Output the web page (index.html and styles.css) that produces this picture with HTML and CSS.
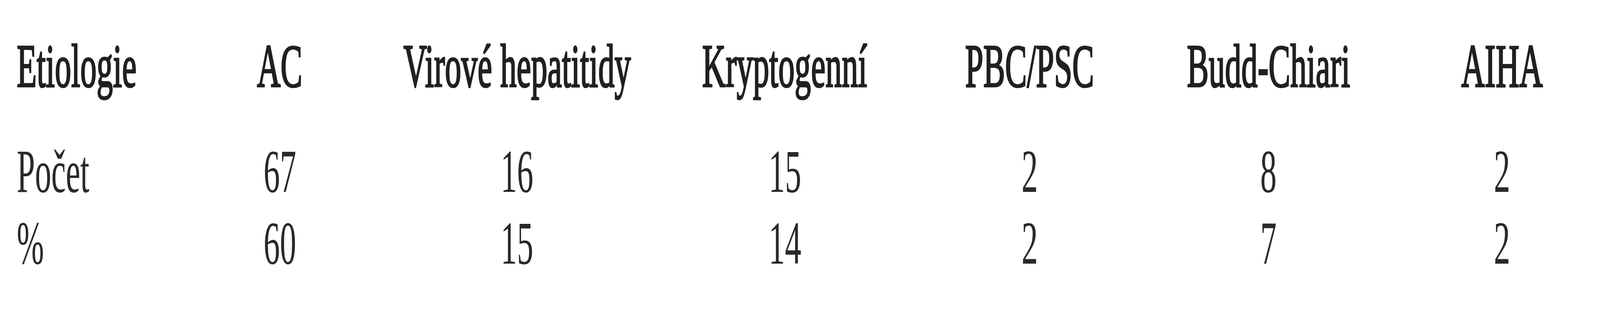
FILE: index.html
```html
<!DOCTYPE html>
<html lang="cs">
<head>
<meta charset="utf-8">
<title>Etiologie</title>
<link rel="stylesheet" href="styles.css">
</head>
<body>
<div class="page">
  <div class="etio" role="table">
    <div class="row head" role="row">
      <div class="cell label" role="columnheader"><span>Etiologie</span></div>
      <div class="cell" role="columnheader"><span>AC</span></div>
      <div class="cell" role="columnheader"><span>Virové hepatitidy</span></div>
      <div class="cell" role="columnheader"><span>Kryptogenní</span></div>
      <div class="cell" role="columnheader"><span>PBC/PSC</span></div>
      <div class="cell" role="columnheader"><span>Budd-Chiari</span></div>
      <div class="cell" role="columnheader"><span>AIHA</span></div>
    </div>
    <div class="row data" role="row">
      <div class="cell label" role="cell"><span>Počet</span></div>
      <div class="cell" role="cell"><span>67</span></div>
      <div class="cell" role="cell"><span>16</span></div>
      <div class="cell" role="cell"><span>15</span></div>
      <div class="cell" role="cell"><span>2</span></div>
      <div class="cell" role="cell"><span>8</span></div>
      <div class="cell" role="cell"><span>2</span></div>
    </div>
    <div class="row data" role="row">
      <div class="cell label" role="cell"><span>%</span></div>
      <div class="cell" role="cell"><span>60</span></div>
      <div class="cell" role="cell"><span>15</span></div>
      <div class="cell" role="cell"><span>14</span></div>
      <div class="cell" role="cell"><span>2</span></div>
      <div class="cell" role="cell"><span>7</span></div>
      <div class="cell" role="cell"><span>2</span></div>
    </div>
  </div>
</div>
</body>
</html>
```
FILE: styles.css
```css
:root {
  --sx: 1;
}
@media (max-width: 4200px) {
  :root { --sx: 0.5325; }
}
html, body {
  margin: 0;
  padding: 0;
  background: #ffffff;
}
.page {
  width: 100%;
  height: 800px;
  padding-top: 77px;
  box-sizing: border-box;
  overflow: hidden;
  background: #ffffff;
}
.etio {
  padding-left: 1.053%;
  font-family: "Liberation Serif", "Times New Roman", serif;
  font-size: 157px;
  line-height: 184px;
  color: #231f20;
}
.row {
  display: grid;
  grid-template-columns:
    minmax(0, 727fr) minmax(0, 1074fr) minmax(0, 1208fr)
    minmax(0, 1366fr) minmax(0, 988fr) minmax(0, 1308fr) minmax(0, 940fr);
}
.head {
  padding-bottom: 86px;
}
.cell {
  display: flex;
  justify-content: center;
  min-width: 0;
  white-space: nowrap;
}
.cell span {
  display: inline-block;
  flex: none;
  transform: scaleX(var(--sx));
  transform-origin: 50% 50%;
}
.cell.label {
  justify-content: flex-start;
}
.cell.label span {
  transform-origin: 0 50%;
}
.head .cell span {
  -webkit-text-stroke: 4px #231f20;
}
.data .cell {
  color: #2b2829;
}
```
